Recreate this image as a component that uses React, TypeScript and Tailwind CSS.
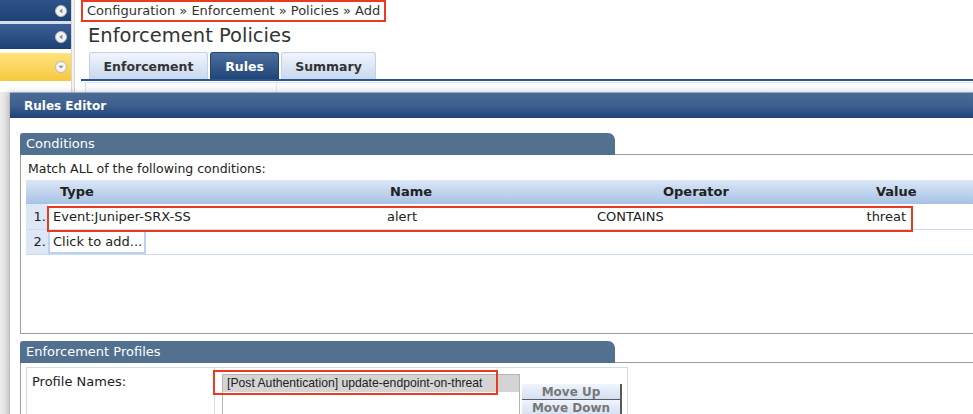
import React from 'react';

const verdana = { fontFamily: '"DejaVu Sans", Verdana, sans-serif' };

// little round toggle used on the navigation rows
const NavToggle = ({ open }: { open?: boolean }) => (
  <svg width="12" height="12" viewBox="0 0 12 12" className="shrink-0">
    <circle cx="6" cy="6" r="5.5" fill="#f4f4f4" stroke="#b9b9b9" />
    {open ? (
      <path d="M3.6 4.8 L8.4 4.8 L6 7.6 Z" fill="#8a8a8a" />
    ) : (
      <path d="M7.4 3.4 L7.4 8.6 L4.2 6 Z" fill="#8a8a8a" />
    )}
  </svg>
);

const SideNav = () => (
  <div className="w-[71px] shrink-0 flex flex-col">
    <div className="h-[21px] bg-gradient-to-b from-[#2f5289] to-[#1f4275] flex items-center justify-end pr-[4px]">
      <NavToggle />
    </div>
    <div className="h-[3px] bg-[#d7dfeb]" />
    <div className="h-[25px] bg-gradient-to-b from-[#3b5f95] to-[#1f4275] flex items-center justify-end pr-[4px]">
      <NavToggle />
    </div>
    <div className="h-[4px] bg-white" />
    <div className="h-[28px] bg-gradient-to-b from-[#ffe27a] to-[#f7c83c] flex items-center justify-end pr-[4px]">
      <NavToggle open />
    </div>
  </div>
);

type TabProps = { label: string; active?: boolean; width: string };

const Tab = ({ label, active, width }: TabProps) => (
  <div
    className={`${width} h-[27px] rounded-t-[3px] flex items-center justify-center pt-[2px] text-[12.5px] font-bold border border-b-0 ${
      active
        ? 'bg-gradient-to-b from-[#4d6f9e] to-[#1f4577] text-white border-[#1f4577]'
        : 'bg-gradient-to-b from-[#f1f5fc] to-[#c8d8ee] text-[#333] border-[#c2d1e8]'
    }`}
  >
    {label}
  </div>
);

const PageBehind = () => (
  <div className="flex h-full">
    <SideNav />
    <div className="w-[4px] border-l border-r border-[#d6d6d6] bg-[#f2f2f2]" />
    <div className="flex-1 flex flex-col pl-[6px]">
      <div className="self-start h-[22px] flex items-center pl-[6px] pr-[6px] text-[13px] text-[#333] outline-2 outline-[#ec3a22] -outline-offset-2">
        Configuration » Enforcement » Policies » Add
      </div>
      <div className="h-[31px] flex items-center pl-[7px] pb-[2px] text-[19.5px] text-[#333] leading-none">
        Enforcement Policies
      </div>
      <div className="flex gap-[2px] pl-[8px] items-end">
        <Tab label="Enforcement" width="w-[119px]" />
        <Tab label="Rules" width="w-[69px]" active />
        <Tab label="Summary" width="w-[95px]" />
      </div>
      <div className="h-[2px] bg-[#2a5390]" />
      <div className="flex ml-[4px] h-[10px] mt-[1px] border-l border-t border-[#d8e2f1] bg-[#fbfcff]">
        <div className="w-[191px] border-r border-[#dfe7f3]" />
      </div>
    </div>
  </div>
);

const SectionHead = ({ title }: { title: string }) => (
  <div className="flex items-end">
    <div className="w-[595px] h-[22px] bg-[#52708f] rounded-tl-[3px] rounded-tr-[7px] flex items-center pl-[6px] text-[13px] text-white">
      {title}
    </div>
    <div className="flex-1 border-b border-[#9c9c9c]" />
  </div>
);

const ConditionsTable = () => (
  <div className="text-[13px] text-[#222]">
    <div className="grid grid-cols-[22px_337px_210px_205px_113px_1fr] h-[24px] items-center bg-gradient-to-b from-[#dbe7f6] to-[#a9c4e5] font-bold border-b border-[#a9c0df]">
      <div />
      <div className="pl-[12px]">Type</div>
      <div className="pl-[5px]">Name</div>
      <div className="pl-[68px]">Operator</div>
      <div className="pl-[76px]">Value</div>
      <div />
    </div>
    <div className="relative grid grid-cols-[22px_337px_210px_205px_113px_1fr] h-[26px] items-center border-b border-[#cbdaf0]">
      <div className="h-full bg-[#dde7f5] flex items-center justify-end pr-[2px]">1.</div>
      <div className="pl-[5px]">Event:Juniper-SRX-SS</div>
      <div className="pl-[2px]">alert</div>
      <div className="pl-[2px]">CONTAINS</div>
      <div className="text-right pr-[7px]">threat</div>
      <div />
      <div className="absolute left-[21px] top-[2px] w-[866px] h-[26px] border-2 border-[#ec3a22]" />
    </div>
    <div className="grid grid-cols-[22px_98px_1fr] h-[25px] items-stretch border-b border-[#cbdaf0]">
      <div className="bg-[#dde7f5] flex items-center justify-end pr-[2px]">2.</div>
      <div className="flex items-center pl-[3px] border-2 border-[#bcd3f0] bg-white">Click to add...</div>
      <div />
    </div>
  </div>
);

const MoveButton = ({ label }: { label: string }) => (
  <div className="w-[100px] h-[16px] flex items-center justify-center text-[12px] font-bold text-[#777] bg-gradient-to-b from-[#f1f5fc] to-[#d3e0f2] border-r-2 border-b border-[#5a5a5a] leading-none">
    {label}
  </div>
);

const RulesEditor = () => (
  <div
    className="absolute left-[10px] top-[92px] w-[990px] h-[340px] bg-white shadow-[-3px_0_6px_rgba(0,0,0,0.18)]"
    style={verdana}
  >
    <div className="h-[26px] bg-gradient-to-b from-[#4a6a96] via-[#3f5f8e] to-[#1d4477] border-t border-[#9aa8bb] flex items-center pl-[14px] text-[12px] font-bold text-white">
      Rules Editor
    </div>

    <div className="pl-[10px] pt-[15px]">
      <SectionHead title="Conditions" />
      <div className="h-[179px] border-l border-b border-[#9c9c9c] px-[5px]">
        <div className="h-[25px] flex items-end pl-[2px] pb-[1px] text-[12.5px] text-[#222]">
          Match ALL of the following conditions:
        </div>
        <ConditionsTable />
      </div>

      <div className="mt-[7px]">
        <SectionHead title="Enforcement Profiles" />
        <div className="h-[60px] border-l border-[#9c9c9c] pl-[5px] pt-[4px]">
          <div className="flex w-[602px] h-[56px] border border-[#cfdcee]">
            <div className="w-[188px] shrink-0 border-r border-[#cfdcee] pl-[5px] pt-[4px] text-[13px] text-[#222]">
              Profile Names:
            </div>
            <div className="flex pl-[7px] pt-[6px]">
              <div className="relative w-[298px] h-[60px] border border-[#b5b5b5] shrink-0">
                <div
                  className="h-[17px] bg-[#d4d4d4] flex items-center pl-[4px] text-[12.2px] text-[#222]"
                  style={{ fontFamily: '"Liberation Sans", Arial, sans-serif' }}
                >
                  [Post Authentication] update-endpoint-on-threat
                </div>
                <div className="absolute -left-[10px] -top-[5px] w-[285px] h-[25px] border-2 border-[#ec3a22]" />
              </div>
              <div className="flex flex-col pt-[10px] pl-[2px]">
                <MoveButton label="Move Up" />
                <MoveButton label="Move Down" />
              </div>
            </div>
          </div>
        </div>
      </div>
    </div>
  </div>
);

export default function App() {
  return (
    <div className="relative w-[973px] h-[414px] overflow-hidden bg-white" style={verdana}>
      <div className="h-[92px]">
        <PageBehind />
      </div>
      <div className="h-[322px] w-[10px] bg-[#ebebeb] border-r border-[#d9d9d9]" />
      <RulesEditor />
    </div>
  );
}
